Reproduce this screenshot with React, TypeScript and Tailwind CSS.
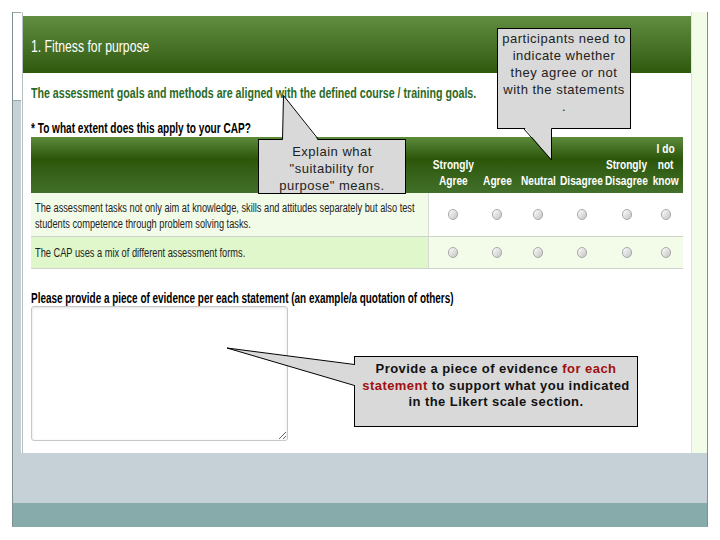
import React from "react";

const Radio = () => (
  <span className="inline-block w-[10px] h-[11px] rounded-full border border-[#a9a9a9] bg-linear-to-br from-[#fdfdfd] to-[#c4c4c4]" />
);

const cols = "grid grid-cols-[398px_48px_40px_42px_45px_45px_34px]";

const headers: React.ReactNode[] = [
  <>Strongly<br />Agree</>,
  <>Agree</>,
  <>Neutral</>,
  <>Disagree</>,
  <>Strongly<br />Disagree</>,
  <>I do<br />not<br />know</>,
];

export default function App() {
  return (
    <div className="relative w-[720px] h-[540px] bg-white overflow-hidden pl-[12px] pt-[12px] font-['Liberation_Sans',Arial,sans-serif]">
      <div className="flex flex-col w-[696px] h-[515px] border-x border-[#7f9192]">
        <div className="flex h-[441px]">
          <div className="w-[8px] flex flex-col">
            <div className="h-[89px] bg-white border-y border-[#9aa8aa]" />
            <div className="flex-1 bg-[#c6d1d7]" />
          </div>
          <div className="w-px bg-white" />
          <div className="w-px bg-[#b4c0c4]" />
          <div className="w-[668px] bg-white pt-[4px]">
            <div className="h-[57px] bg-linear-to-b from-[#628e41] to-[#2f5a0c] flex items-center pl-[8px] pt-[4px]">
              <span className="text-white text-[17px] leading-[20px] origin-left scale-x-[0.72] whitespace-nowrap">
                1. Fitness for purpose
              </span>
            </div>
            <div className="px-[8px]">
              <div className="mt-[10px] h-[20px] leading-[20px] text-[14px] font-bold text-[#2a6a25] whitespace-nowrap origin-left scale-x-[0.76]">
                The assessment goals and methods are aligned with the defined course / training goals.
              </div>
              <div className="mt-[16px] h-[18px] leading-[18px] text-[14px] font-bold text-black whitespace-nowrap origin-left scale-x-[0.72]">
                * To what extent does this apply to your CAP?
              </div>
              <div className={`${cols} h-[56px] bg-linear-to-b from-[#5c8b3a] via-[#2c5608] via-40% to-[#42702a]`}>
                <div />
                {headers.map((h, i) => (
                  <div key={i} className="flex items-end justify-center pb-[4px]">
                    <span className="text-center text-white font-bold text-[13px] leading-[16px] scale-x-[0.78] whitespace-nowrap">
                      {h}
                    </span>
                  </div>
                ))}
              </div>
              <div className={`${cols} h-[44px] border-b border-[#cdd4c9]`}>
                <div className="bg-[#f1fbe8] border-r border-[#d6ddd1] pt-[7px] pl-[4px] text-[12px] leading-[16px] text-[#222] whitespace-nowrap">
                  <div className="origin-left scale-x-[0.77]">
                    The assessment tasks not only aim at knowledge, skills and attitudes separately but also test
                  </div>
                  <div className="origin-left scale-x-[0.77]">
                    students competence through problem solving tasks.
                  </div>
                </div>
                {[0, 1, 2, 3, 4, 5].map((i) => (
                  <div key={i} className="bg-white flex items-center justify-center pb-[1px]">
                    <Radio />
                  </div>
                ))}
              </div>
              <div className={`${cols} h-[32px] border-b border-[#cdd4c9]`}>
                <div className="bg-[#e0f6cb] border-r border-[#d6ddd1] pl-[4px] flex items-center text-[12px] text-[#222] whitespace-nowrap">
                  <div className="origin-left scale-x-[0.77]">
                    The CAP uses a mix of different assessment forms.
                  </div>
                </div>
                {[0, 1, 2, 3, 4, 5].map((i) => (
                  <div key={i} className="bg-[#f3fce9] flex items-center justify-center">
                    <Radio />
                  </div>
                ))}
              </div>
              <div className="mt-[21px] h-[16px] leading-[16px] text-[14px] font-bold text-black whitespace-nowrap origin-left scale-x-[0.71]">
                Please provide a piece of evidence per each statement (an example/a quotation of others)
              </div>
              <textarea className="block w-[257px] h-[135px] border border-[#c8c8c8] rounded-[3px] shadow-[inset_0_1px_3px_rgba(0,0,0,0.12)] resize bg-white" />
            </div>
          </div>
          <div className="w-[16px] bg-[#f2fce9] border-l border-[#dde8d4]" />
        </div>
        <div className="h-[50px] bg-[#c6d1d7]" />
        <div className="h-[24px] bg-[#87abab]" />
      </div>

      {/* callouts */}
      <div className="absolute left-[497px] top-[28px] w-[134px] h-[101px] bg-[#d9d9d9] border border-black pt-[1px] text-center text-[13px] leading-[17px] tracking-[0.5px] text-[#222]">
        participants need to
        <br />
        indicate whether
        <br />
        they agree or not
        <br />
        with the statements
        <br />.
      </div>
      <div className="absolute left-[258px] top-[139px] w-[148px] h-[55px] bg-[#d9d9d9] border border-black pt-[3px] text-center text-[13px] leading-[17px] tracking-[0.5px] text-[#222]">
        Explain what
        <br />
        "suitability for
        <br />
        purpose" means.
      </div>
      <div className="absolute left-[354px] top-[356px] w-[284px] h-[71px] bg-[#d9d9d9] border border-black pt-[4px] text-center text-[13px] leading-[16.5px] font-bold tracking-[0.45px] text-[#111]">
        Provide a piece of evidence <span className="text-[#a01010]">for each</span>
        <br />
        <span className="text-[#a01010]">statement</span> to support what you indicated
        <br />
        in the Likert scale section.
      </div>
      <svg className="absolute left-0 top-0 pointer-events-none" width="720" height="540">
        <polygon points="523.5,126.5 551.5,160 551.5,126.5" fill="#d9d9d9" />
        <polyline points="523.5,128.5 551.5,160 551.5,128.5" fill="none" stroke="#000" strokeWidth="1" />
        <polygon points="282.5,141 283.5,95.5 318.5,141" fill="#d9d9d9" />
        <polyline points="282.5,139.5 283.5,95.5 318.5,139.5" fill="none" stroke="#000" strokeWidth="1" />
        <polygon points="355.5,365 227,348 355.5,385.5" fill="#d9d9d9" />
        <polyline points="354.5,364.5 227,348 354.5,385.5" fill="none" stroke="#000" strokeWidth="1" />
      </svg>
    </div>
  );
}
